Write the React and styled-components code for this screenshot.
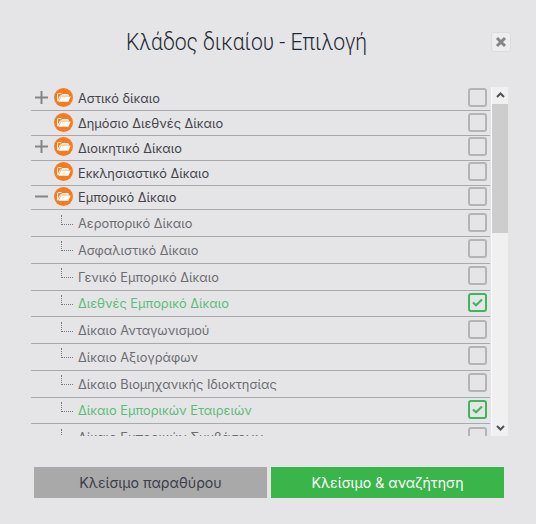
import { createGlobalStyle, styled } from "styled-components";

const GlobalStyle = createGlobalStyle`
  html, body {
    margin: 0;
    padding: 0;
    background: #e5e5e8;
  }
  body {
    font-family: "Inter", sans-serif;
    overflow: hidden;
  }
`;

const Dialog = styled.div`
  width: 536px;
  height: 524px;
  box-sizing: border-box;
  display: flex;
  flex-direction: column;
  background: #e5e5e8;
  padding: 26px 25px 0 31px;
`;

const Header = styled.div`
  display: flex;
  align-items: flex-start;
  justify-content: space-between;
  height: 60.5px;
`;

const Title = styled.h1`
  margin: 0 0 0 95px;
  font-family: "Roboto", sans-serif;
  font-weight: 300;
  font-size: 23.5px;
  line-height: 32px;
  color: #1d2a33;
  transform: scaleX(0.9);
  transform-origin: left center;
`;

const CloseButton = styled.button`
  width: 20px;
  height: 20px;
  margin-top: 6px;
  padding: 0;
  display: flex;
  align-items: center;
  justify-content: center;
  box-sizing: border-box;
  background: #ededef;
  border: 1px solid #dcdcde;
  border-radius: 3px;
`;

const ListArea = styled.div`
  display: flex;
  height: 349.5px;
`;

const List = styled.div`
  width: 459px;
  overflow: hidden;
`;

const RowBox = styled.div`
  height: ${({ $child }) => ($child ? "26.75px" : "24.75px")};
  box-sizing: border-box;
  padding-bottom: 2px;
  display: flex;
  align-items: center;
  border-bottom: 1px solid #a9a9ab;
  flex-shrink: 0;
`;

const Toggle = styled.span`
  width: 20px;
  height: 19px;
  margin-right: 3px;
  display: flex;
  align-items: center;
  justify-content: center;
  flex-shrink: 0;
`;

const Connector = styled.span`
  width: 12px;
  height: 10px;
  margin: -5px 5px 0 30px;
  flex-shrink: 0;
  box-sizing: border-box;
  border-left: 1px dotted #77777a;
  border-bottom: 1px dotted #77777a;
`;

const FolderBadge = styled.span`
  width: 19px;
  height: 19px;
  border-radius: 50%;
  background: #f47b20;
  display: flex;
  align-items: center;
  justify-content: center;
  margin-right: 5px;
  flex-shrink: 0;
`;

const Label = styled.span`
  flex: 1;
  margin-top: 4px;
  font-size: 12.8px;
  line-height: 16px;
  white-space: nowrap;
  color: ${({ $selected, $child }) =>
    $selected ? "#5cbd77" : $child ? "#6d6d72" : "#44444a"};
`;

const CheckBox = styled.span`
  width: 19px;
  height: 19px;
  margin-right: 3px;
  box-sizing: border-box;
  border: 2px solid ${({ $checked }) => ($checked ? "#3fb65a" : "#b4b4b6")};
  border-radius: 3px;
  display: flex;
  align-items: center;
  justify-content: center;
  flex-shrink: 0;
`;

const Scrollbar = styled.div`
  width: 16px;
  margin-left: 1px;
  border-left: 1px solid #f7f7f8;
  background: #f0f0f1;
  display: flex;
  flex-direction: column;
  align-items: stretch;
`;

const ScrollArrow = styled.div`
  height: 17px;
  display: flex;
  align-items: center;
  justify-content: center;
  flex-shrink: 0;
`;

const ScrollThumb = styled.div`
  height: 129px;
  background: #cdcdcd;
  flex-shrink: 0;
`;

const ScrollTrack = styled.div`
  flex: 1;
`;

const Footer = styled.div`
  display: flex;
  gap: 4px;
  margin: 31px 0 0 3px;
`;

const ActionButton = styled.button`
  width: 233px;
  height: 31px;
  padding: 0;
  border: none;
  font-family: "Inter", sans-serif;
  font-size: 14.2px;
  background: ${({ $primary }) => ($primary ? "#39b54a" : "#a9a9a9")};
  color: ${({ $primary }) => ($primary ? "#ffffff" : "#3c3f4a")};
`;

const rows = [
  { label: "Αστικό δίκαιο", toggle: "plus" },
  { label: "Δημόσιο Διεθνές Δίκαιο" },
  { label: "Διοικητικό Δίκαιο", toggle: "plus" },
  { label: "Εκκλησιαστικό Δίκαιο" },
  { label: "Εμπορικό Δίκαιο", toggle: "minus" },
  { label: "Αεροπορικό Δίκαιο", child: true },
  { label: "Ασφαλιστικό Δίκαιο", child: true },
  { label: "Γενικό Εμπορικό Δίκαιο", child: true },
  { label: "Διεθνές Εμπορικό Δίκαιο", child: true, checked: true },
  { label: "Δίκαιο Ανταγωνισμού", child: true },
  { label: "Δίκαιο Αξιογράφων", child: true },
  { label: "Δίκαιο Βιομηχανικής Ιδιοκτησίας", child: true },
  { label: "Δίκαιο Εμπορικών Εταιρειών", child: true, checked: true },
  { label: "Δίκαιο Εμπορικών Συμβάσεων", child: true },
];

function FolderIcon() {
  return (
    <svg width="14" height="9" viewBox="0 0 14 9">
      <path
        d="M0.6 8V1.1C0.6 0.8 0.8 0.6 1.1 0.6H4.2L5.2 1.6H10.9C11.2 1.6 11.4 1.8 11.4 2.1V2.8H3.4L0.8 8.4"
        fill="none"
        stroke="#fff"
        strokeWidth="1"
      />
      <path d="M3.9 3.6H13.8L11.4 8.8H1.6Z" fill="#fff" />
    </svg>
  );
}

function ToggleIcon({ type }) {
  return (
    <svg width="13" height="13" viewBox="0 0 13 13">
      <path d="M0 6.5H13" stroke="#858588" strokeWidth="2" />
      {type === "plus" && <path d="M6.5 0V13" stroke="#858588" strokeWidth="2" />}
    </svg>
  );
}

function CheckIcon() {
  return (
    <svg width="11" height="9" viewBox="0 0 11 9">
      <path d="M1 4.5L4 7.2L10 1.5" fill="none" stroke="#3fb65a" strokeWidth="2.2" />
    </svg>
  );
}

function Row({ label, toggle, child, checked }) {
  return (
    <RowBox $child={child}>
      {child ? (
        <Connector />
      ) : (
        <>
          <Toggle>{toggle && <ToggleIcon type={toggle} />}</Toggle>
          <FolderBadge>
            <FolderIcon />
          </FolderBadge>
        </>
      )}
      <Label $child={child} $selected={checked}>
        {label}
      </Label>
      <CheckBox $checked={checked}>{checked && <CheckIcon />}</CheckBox>
    </RowBox>
  );
}

export default function App() {
  return (
    <>
      <GlobalStyle />
      <Dialog>
        <Header>
          <Title>Κλάδος δικαίου - Επιλογή</Title>
          <CloseButton aria-label="close">
            <svg width="12" height="12" viewBox="0 0 12 12">
              <path d="M2 2L10 10M10 2L2 10" stroke="#858588" strokeWidth="3" />
            </svg>
          </CloseButton>
        </Header>
        <ListArea>
          <List>
            {rows.map((row) => (
              <Row key={row.label} {...row} />
            ))}
          </List>
          <Scrollbar>
            <ScrollArrow>
              <svg width="9" height="6" viewBox="0 0 9 6">
                <path d="M1 5L4.5 1.5L8 5" fill="none" stroke="#505055" strokeWidth="2" />
              </svg>
            </ScrollArrow>
            <ScrollThumb />
            <ScrollTrack />
            <ScrollArrow>
              <svg width="9" height="6" viewBox="0 0 9 6">
                <path d="M1 1L4.5 4.5L8 1" fill="none" stroke="#505055" strokeWidth="2" />
              </svg>
            </ScrollArrow>
          </Scrollbar>
        </ListArea>
        <Footer>
          <ActionButton>Κλείσιμο παραθύρου</ActionButton>
          <ActionButton $primary>Κλείσιμο &amp; αναζήτηση</ActionButton>
        </Footer>
      </Dialog>
    </>
  );
}
